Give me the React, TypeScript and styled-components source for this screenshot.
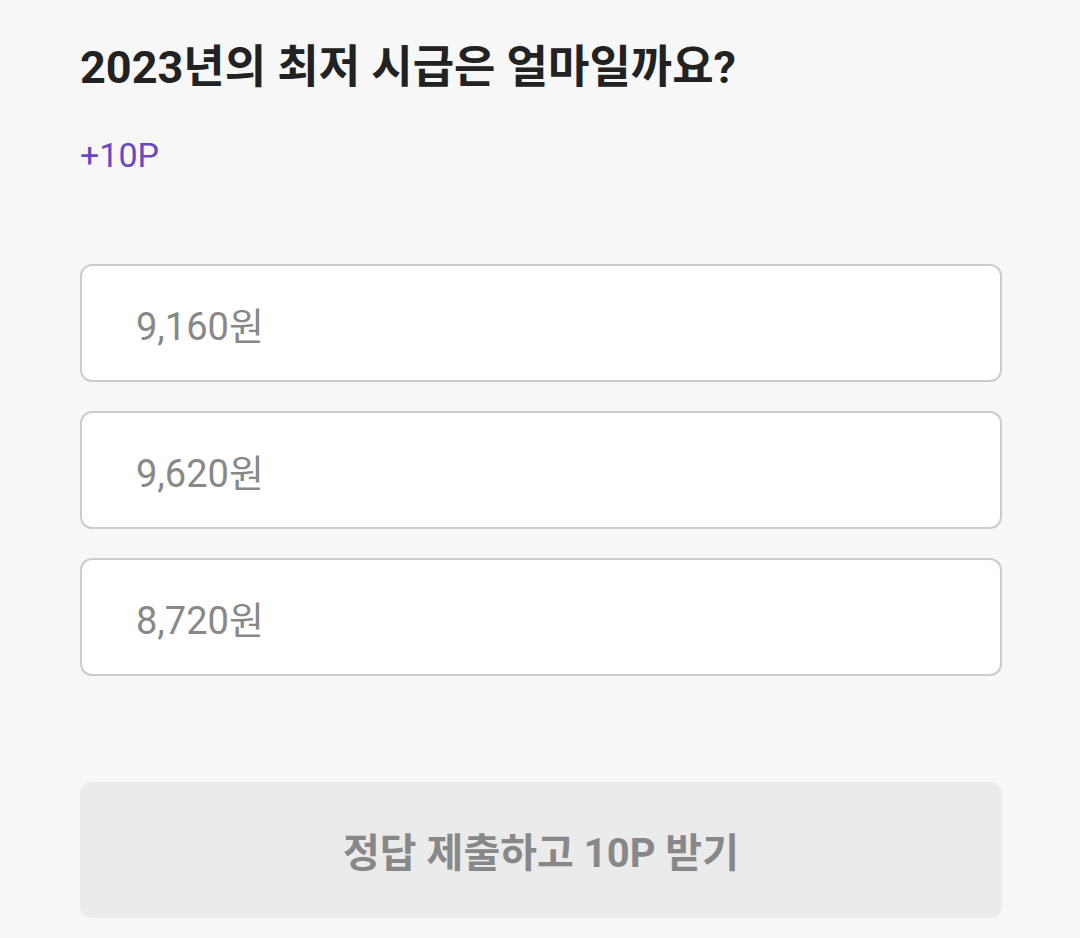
import React, { FC } from "react";
import styled, { createGlobalStyle } from "styled-components";

const GlobalStyle = createGlobalStyle`
  html, body {
    margin: 0;
    padding: 0;
    background: #f7f7f7;
  }
  body {
    font-family: Roboto, "Noto Sans CJK KR", sans-serif;
  }
`;

const options = ["9,160원", "9,620원", "8,720원"];

const App: FC = () => {
  return (
    <Root>
      <GlobalStyle />
      <Title>2023년의 최저 시급은 얼마일까요?</Title>
      <Point>+10P</Point>
      <OptionList>
        {options.map((option) => (
          <Option key={option}>{option}</Option>
        ))}
      </OptionList>
      <SubmitButton disabled>정답 제출하고 10P 받기</SubmitButton>
    </Root>
  );
};

export default App;

const Root = styled.div`
  width: 922px;
  padding: 38px 78px 0 80px;
  display: flex;
  flex-direction: column;
`;
const Title = styled.h1`
  margin: 0;
  font-size: 45px;
  font-weight: 700;
  line-height: 60px;
  color: #222222;
`;
const Point = styled.div`
  margin-top: 37px;
  font-size: 34px;
  line-height: 40px;
  color: #6a48bf;
`;
const OptionList = styled.div`
  margin-top: 89px;
  display: flex;
  flex-direction: column;
  gap: 29px;
`;
const Option = styled.div`
  height: 114px;
  box-sizing: content-box;
  border: 2px solid #cccccc;
  border-radius: 12px;
  background: #ffffff;
  display: flex;
  align-items: center;
  padding-left: 54px;
  font-size: 38px;
  color: #888888;
`;
const SubmitButton = styled.button`
  margin-top: 106px;
  height: 136px;
  border: none;
  border-radius: 12px;
  background: #ebebeb;
  font-family: Roboto, "Noto Sans CJK KR", sans-serif;
  font-size: 40px;
  font-weight: 700;
  color: #888888;
`;
